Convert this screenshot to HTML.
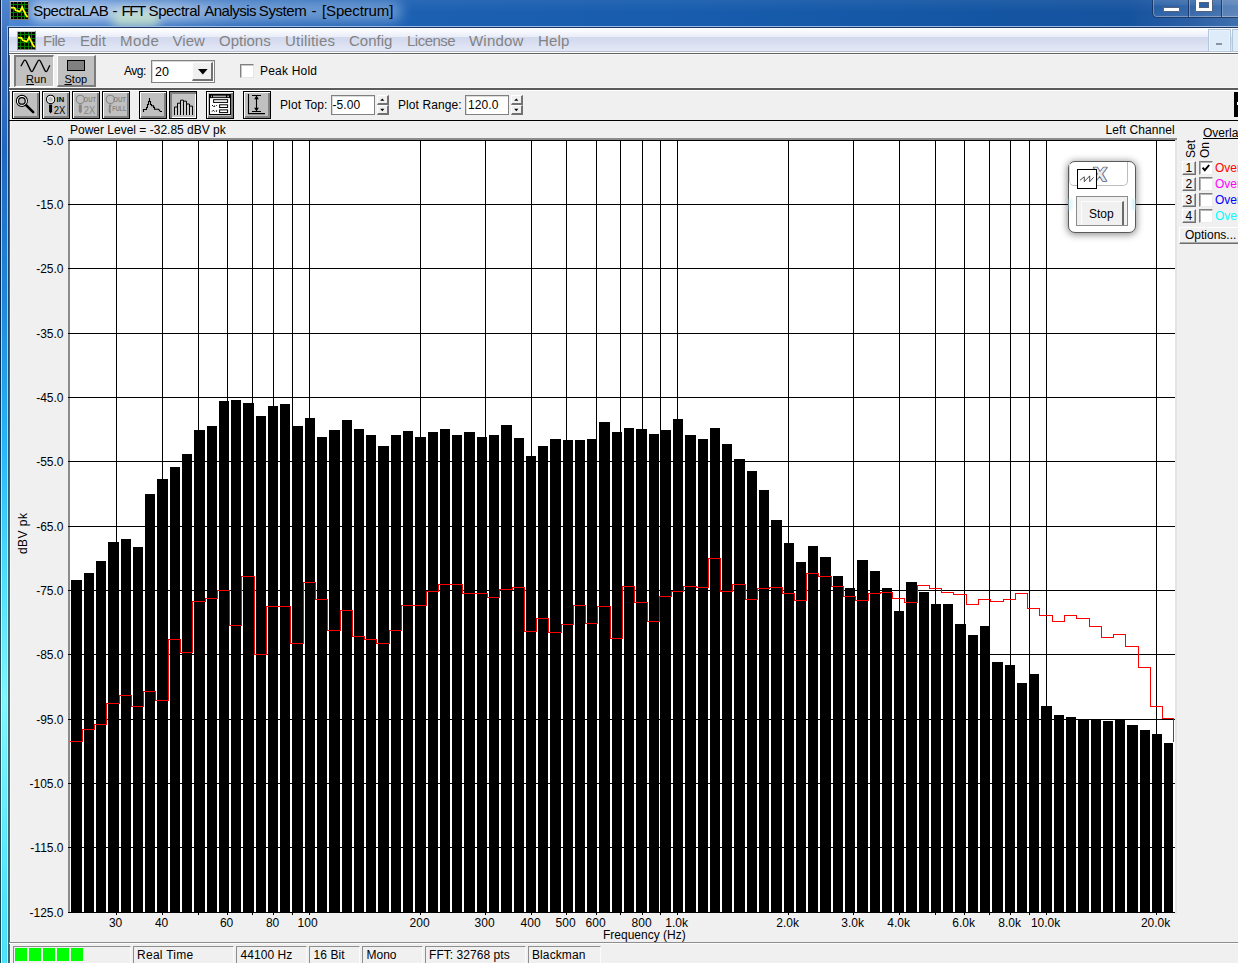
<!DOCTYPE html>
<html><head><meta charset="utf-8"><title>SpectraLAB</title>
<style>
html,body{margin:0;padding:0;}
body{width:1238px;height:963px;overflow:hidden;background:#f0f0f0;position:relative;font-family:'Liberation Sans', Arial, sans-serif;}
.t{position:absolute;white-space:nowrap;line-height:normal;font-family:'Liberation Sans', Arial, sans-serif;}
.b{position:absolute;box-sizing:border-box;}
svg{position:absolute;overflow:visible;}
</style></head>
<body>
<div class="b" style="left:0px;top:0px;width:1238px;height:28px;background:linear-gradient(90deg,#5089d3 0px,#3f7bc9 60px,#2b6abb 200px,#1c60b2 420px,#175cad 700px,#1455a2 1000px,#16539f 1130px,#2a5fa5 1190px,#3f6fae 1238px);"></div>
<div class="b" style="left:0px;top:0px;width:1238px;height:28px;background:linear-gradient(180deg,rgba(255,255,255,0.06) 0,rgba(255,255,255,0) 12px,rgba(0,0,40,0.0) 26px);"></div>
<div class="b" style="left:30px;top:1px;width:372px;height:21px;background:linear-gradient(90deg,rgba(235,243,255,0.66) 0,rgba(235,243,255,0.62) 38%,rgba(225,238,255,0.40) 55%,rgba(225,238,255,0.36) 100%);filter:blur(6px);border-radius:10px;"></div>
<div class="b" style="left:112px;top:10px;width:48px;height:18px;background:rgba(215,240,200,0.65);filter:blur(5px);border-radius:8px;"></div>
<div class="b" style="left:0px;top:0px;width:9px;height:963px;background:linear-gradient(180deg,#4f86d0 0px,#4278c4 28px,#3a70be 60px,#1e68c4 150px,#1e88e0 300px,#28b8ff 450px,#50e0ff 580px,#80f8ff 700px,#68eeff 800px,#50e4ff 900px,#4ce2ff 963px);"></div>
<div class="b" style="left:0px;top:0px;width:1px;height:963px;background:linear-gradient(180deg,#0a1c3c 0px,#001030 60px,#001838 150px,#002850 300px,#003858 450px,#104858 580px,#205058 700px,#104850 900px);"></div>
<div class="b" style="left:1px;top:0px;width:1px;height:963px;background:linear-gradient(180deg,#b8d0ee 0px,#b0c8e8 60px,#a8c8f0 150px,#a8d4f8 300px,#a8e4ff 450px,#c0f8ff 580px,#d0ffff 700px,#c8fcff 900px);"></div>
<div class="b" style="left:2px;top:28px;width:1px;height:963px;background:rgba(0,20,80,0.04);"></div>
<div class="b" style="left:6px;top:28px;width:1px;height:963px;background:rgba(0,20,80,0.04);"></div>
<div class="b" style="left:7px;top:26px;width:1px;height:963px;background:linear-gradient(180deg,#a8c0e0 0px,#a0c0e8 124px,#a0d0f4 274px,#a8e0fc 424px,#b8f8ff 554px,#b0ffff 674px,#b0fcff 874px);"></div>
<div class="b" style="left:8px;top:27px;width:1px;height:963px;background:linear-gradient(180deg,#1c3560 0px,#1c3860 123px,#204868 273px,#285870 423px,#386870 553px,#406468 673px,#386870 873px);"></div>
<div class="b" style="left:7px;top:26px;width:1238px;height:1px;background:#9dbde6;"></div>
<div class="b" style="left:8px;top:27px;width:1238px;height:1px;background:#1a3560;"></div>
<div class="b" style="left:9px;top:53px;width:1px;height:963px;background:#626262;"></div>
<div class="b" style="left:10px;top:54px;width:1px;height:963px;background:#f9f9f9;"></div>
<svg width="19" height="19" viewBox="0 0 19 19" style="left:10px;top:1px" shape-rendering="crispEdges"><rect x="0" y="0" width="19" height="19" fill="#808080"/><rect x="0" y="0" width="18" height="1" fill="#c4c4c4"/><rect x="0" y="1" width="1" height="17" fill="#9c9c9c"/><rect x="1" y="1" width="17" height="17" fill="#000"/><path d="M3 1h1v17h-1zM7 1h1v17h-1zM11 1h1v17h-1zM14 1h1v17h-1zM1 3h17v1h-17zM1 7h17v1h-17zM1 11h17v1h-17zM1 15h17v1h-17z" fill="#007c00"/><polyline points="1,6.5 4.5,6.9 5.6,9.2 7,9.6 9.5,10.6 10.4,9.8 12.2,6.2 13.5,9.5 14.6,10.8 15.4,13 17.6,16.2" fill="none" stroke="#ffff00" stroke-width="1.7" shape-rendering="auto"/></svg>
<div class="t" style="left:0;top:0;font-size:15px;color:#000;"><span style="position:absolute;left:33.2px;top:2px;letter-spacing:-0.5px">SpectraLAB</span> <span style="position:absolute;left:112.4px;top:2px;letter-spacing:0px">-</span> <span style="position:absolute;left:121.6px;top:2px;letter-spacing:-1.5px">FFT</span> <span style="position:absolute;left:148.6px;top:2px;letter-spacing:-0.47px">Spectral</span> <span style="position:absolute;left:204.2px;top:2px;letter-spacing:-0.49px">Analysis</span> <span style="position:absolute;left:258.8px;top:2px;letter-spacing:-0.4px">System</span> <span style="position:absolute;left:311.4px;top:2px;letter-spacing:0px">-</span> <span style="position:absolute;left:322px;top:2px;letter-spacing:-0.13px">[Spectrum]</span></div>
<div class="b" style="left:1152px;top:-6px;width:100px;height:24px;border:1px solid rgba(20,40,80,0.75);border-radius:5px;background:linear-gradient(180deg,rgba(255,255,255,0.16),rgba(255,255,255,0.08) 45%,rgba(255,255,255,0.02) 50%,rgba(255,255,255,0.10));box-shadow:inset 0 0 0 1px rgba(255,255,255,0.30);"></div>
<div class="b" style="left:1188px;top:0px;width:1px;height:17px;background:rgba(20,40,80,0.75);"></div>
<div class="b" style="left:1189px;top:0px;width:1px;height:17px;background:rgba(255,255,255,0.28);"></div>
<div class="b" style="left:1221px;top:0px;width:1px;height:17px;background:rgba(20,40,80,0.75);"></div>
<div class="b" style="left:1222px;top:0px;width:1px;height:17px;background:rgba(255,255,255,0.28);"></div>
<div class="b" style="left:1223px;top:0px;width:15px;height:17px;background:rgba(255,255,255,0.10);"></div>
<div class="b" style="left:1163px;top:7px;width:17px;height:5px;background:#fff;border:1px solid #53627a;border-radius:1px;"></div>
<div class="b" style="left:1195px;top:-2px;width:18px;height:14px;background:#fff;border:1px solid #53627a;border-radius:1px;"></div>
<div class="b" style="left:1199px;top:2px;width:10px;height:6px;background:#2e64a8;border:1px solid #53627a;"></div>
<div class="b" style="left:9px;top:28px;width:1229px;height:25px;background:linear-gradient(180deg,#ffffff 0,#fbfcfe 2px,#e9edf8 8.8px,#d3daee 9px,#d6dcef 13px,#dde3f3 18px,#e3e8f7 23px,#b9c0d4 23px,#b9c0d4 24px,#ffffff 24px);"></div>
<svg width="19" height="19" viewBox="0 0 19 19" style="left:17px;top:31px" shape-rendering="crispEdges"><rect x="0" y="0" width="19" height="19" fill="#808080"/><rect x="0" y="0" width="18" height="1" fill="#c4c4c4"/><rect x="0" y="1" width="1" height="17" fill="#9c9c9c"/><rect x="1" y="1" width="17" height="17" fill="#000"/><path d="M3 1h1v17h-1zM7 1h1v17h-1zM11 1h1v17h-1zM14 1h1v17h-1zM1 3h17v1h-17zM1 7h17v1h-17zM1 11h17v1h-17zM1 15h17v1h-17z" fill="#007c00"/><polyline points="1,6.5 4.5,6.9 5.6,9.2 7,9.6 9.5,10.6 10.4,9.8 12.2,6.2 13.5,9.5 14.6,10.8 15.4,13 17.6,16.2" fill="none" stroke="#ffff00" stroke-width="1.7" shape-rendering="auto"/></svg>
<div class="t " style="left:43px;top:32px;font-size:15px;color:#838383;letter-spacing:-0.5px;">File</div>
<div class="t " style="left:80px;top:32px;font-size:15px;color:#838383;letter-spacing:0px;">Edit</div>
<div class="t " style="left:120px;top:32px;font-size:15px;color:#838383;letter-spacing:0.4px;">Mode</div>
<div class="t " style="left:172.5px;top:32px;font-size:15px;color:#838383;letter-spacing:0.05px;">View</div>
<div class="t " style="left:219px;top:32px;font-size:15px;color:#838383;letter-spacing:0px;">Options</div>
<div class="t " style="left:285px;top:32px;font-size:15px;color:#838383;letter-spacing:0.2px;">Utilities</div>
<div class="t " style="left:349px;top:32px;font-size:15px;color:#838383;letter-spacing:0px;">Config</div>
<div class="t " style="left:407px;top:32px;font-size:15px;color:#838383;letter-spacing:-0.5px;">License</div>
<div class="t " style="left:469px;top:32px;font-size:15px;color:#838383;letter-spacing:0.2px;">Window</div>
<div class="t " style="left:538px;top:32px;font-size:15px;color:#838383;letter-spacing:0.2px;">Help</div>
<div class="b" style="left:1208px;top:29px;width:23px;height:23px;background:#deebf8;border:1px solid #b4c6dc;box-shadow:inset 0 0 0 1px #eaf2fb;"></div>
<div class="b" style="left:1216px;top:43px;width:6px;height:2px;background:#8a94a2;"></div>
<div class="b" style="left:1232px;top:29px;width:23px;height:23px;background:#deebf8;border:1px solid #b4c6dc;"></div>
<div class="b" style="left:9px;top:53px;width:1229px;height:1px;background:#646464;"></div>
<div class="b" style="left:9px;top:54px;width:1229px;height:1px;background:#f8f8f8;"></div>
<div class="b" style="left:14px;top:55px;width:40px;height:32px;background:#c1c1c1;border-top:2px solid #7c7c7c;border-left:2px solid #7c7c7c;border-bottom:1px solid #fff;border-right:1px solid #fff;"></div>
<svg width="40" height="32" viewBox="14 55 40 32" style="left:14px;top:55px"><path d="M20.9 66.3 L23.3 61.8 Q24.9 58.4 26.5 61.8 L30.3 69.9 Q31.8 73.2 33.3 69.9 L37.5 61.8 Q39.1 58.4 40.7 61.8 L44.6 69.9 Q46.1 73.2 47.6 69.9 L49.8 65.3" fill="none" stroke="#000" stroke-width="1.3"/></svg>
<div class="t " style="left:26px;top:73px;font-size:11px;color:#000;letter-spacing:0.1px;"><u>R</u>un</div>
<div class="b" style="left:57px;top:55px;width:39px;height:32px;background:#c0c0c0;border-top:1px solid #fff;border-left:1px solid #fff;border-bottom:2px solid #7c7c7c;border-right:2px solid #7c7c7c;"></div>
<div class="b" style="left:67px;top:60px;width:18px;height:11px;background:#808080;border:1px solid #000;"></div>
<div class="t " style="left:64.5px;top:73px;font-size:11px;color:#000;letter-spacing:0px;"><u>S</u>top</div>
<div class="t " style="left:124px;top:64px;font-size:12px;color:#000;letter-spacing:-0.5px;">Avg:</div>
<div class="b" style="left:151px;top:60px;width:64px;height:23px;background:#fff;border:1px solid #828282;box-shadow:inset 1px 1px 0 #d8d8d8;"></div>
<div class="t " style="left:155px;top:65px;font-size:12.5px;color:#000;">20</div>
<div class="b" style="left:192px;top:62px;width:21px;height:19px;background:#f0f0f0;border-top:1px solid #fff;border-left:1px solid #fff;border-right:2px solid #727272;border-bottom:2px solid #727272;"></div>
<svg width="10" height="6" viewBox="0 0 10 6" style="left:197.5px;top:68.5px"><path d="M0 0h9.6l-4.8 5.4z" fill="#000"/></svg>
<div class="b" style="left:240px;top:64px;width:14px;height:14px;background:#fff;border-top:1px solid #808080;border-left:1px solid #808080;border-right:1px solid #e6e6e6;border-bottom:1px solid #e6e6e6;box-shadow:inset 1px 1px 0 #c8c8c8;"></div>
<div class="t " style="left:260px;top:64px;font-size:12px;color:#000;letter-spacing:0.2px;">Peak Hold</div>
<div class="b" style="left:9px;top:87px;width:1229px;height:1px;background:#f7f7f7;"></div>
<div class="b" style="left:9px;top:88px;width:1229px;height:1px;background:#5c5c5c;"></div>
<div class="b" style="left:9px;top:89px;width:1229px;height:1px;background:#5c5c5c;"></div>
<div class="b" style="left:9px;top:90px;width:1229px;height:1px;background:#ffffff;"></div>
<div class="b" style="left:9px;top:120px;width:1229px;height:1px;background:#000;"></div>
<div class="b" style="left:12px;top:91px;width:28px;height:28px;background:#c0c0c0;border:1px solid #000;box-shadow:inset 1px 1px 0 #fff,inset -2px -2px 0 #808080;"></div>
<div class="b" style="left:42px;top:91px;width:28px;height:28px;background:#c0c0c0;border:1px solid #000;box-shadow:inset 1px 1px 0 #fff,inset -2px -2px 0 #808080;"></div>
<div class="b" style="left:72px;top:91px;width:28px;height:28px;background:#c0c0c0;border:1px solid #000;box-shadow:inset 1px 1px 0 #fff,inset -2px -2px 0 #808080;"></div>
<div class="b" style="left:102px;top:91px;width:28px;height:28px;background:#c0c0c0;border:1px solid #000;box-shadow:inset 1px 1px 0 #fff,inset -2px -2px 0 #808080;"></div>
<div class="b" style="left:139px;top:91px;width:28px;height:28px;background:#c0c0c0;border:1px solid #000;box-shadow:inset 1px 1px 0 #fff,inset -2px -2px 0 #808080;"></div>
<div class="b" style="left:169px;top:91px;width:28px;height:28px;background:#c4c4c4;border:1px solid #000;box-shadow:inset 2px 2px 0 #808080,inset -1px -1px 0 #fff;"></div>
<div class="b" style="left:206px;top:91px;width:28px;height:28px;background:#c0c0c0;border:1px solid #000;box-shadow:inset 1px 1px 0 #fff,inset -2px -2px 0 #808080;"></div>
<div class="b" style="left:243px;top:91px;width:28px;height:28px;background:#c0c0c0;border:1px solid #000;box-shadow:inset 1px 1px 0 #fff,inset -2px -2px 0 #808080;"></div>
<svg width="28" height="28" viewBox="12 91 28 28" style="left:12px;top:91px"><circle cx="21.9" cy="100.9" r="5.4" fill="none" stroke="#000" stroke-width="1.3"/><circle cx="21.9" cy="100.9" r="4.4" fill="none" stroke="#fff" stroke-width="1.1"/><circle cx="21.9" cy="100.9" r="3.3" fill="none" stroke="#000" stroke-width="1.2"/><path d="M26.3 105.3L33.2 112.2" stroke="#000" stroke-width="2.6" stroke-linecap="round"/></svg>
<svg width="28" height="28" viewBox="42 91 28 28" style="left:42px;top:91px"><circle cx="50.6" cy="99.4" r="4.1" fill="none" stroke="#000" stroke-width="1.1"/><circle cx="50.6" cy="99.4" r="3.1" fill="#c0c0c0" stroke="#fff" stroke-width="1"/><path d="M49.1 104.6h3v7l-1.5 2l-1.5 -2z" fill="#000"/><text x="56.6" y="102.2" style="font-family:'Liberation Sans',Arial,sans-serif;font-size:6.5px;font-weight:bold" fill="#000" textLength="7.6" lengthAdjust="spacingAndGlyphs">IN</text><text x="53.8" y="113.7" style="font-family:'Liberation Sans',Arial,sans-serif;font-size:11.6px" fill="#000" textLength="11.6" lengthAdjust="spacingAndGlyphs">2X</text></svg>
<svg width="28" height="28" viewBox="72 91 28 28" style="left:72px;top:91px"><circle cx="80.3" cy="99.4" r="4.1" fill="none" stroke="#868686" stroke-width="1.1"/><path d="M78.8 104.6h3v7l-1.5 2l-1.5 -2z" fill="#868686"/><text x="83.6" y="102.2" style="font-family:'Liberation Sans',Arial,sans-serif;font-size:6.5px;font-weight:bold" fill="#868686" textLength="12.4" lengthAdjust="spacingAndGlyphs">OUT</text><text x="83.8" y="113.7" style="font-family:'Liberation Sans',Arial,sans-serif;font-size:11.6px" fill="#868686" textLength="11.4" lengthAdjust="spacingAndGlyphs">2X</text></svg>
<svg width="28" height="28" viewBox="102 91 28 28" style="left:102px;top:91px"><circle cx="110.3" cy="99.4" r="4.1" fill="none" stroke="#868686" stroke-width="1.1"/><path d="M109 104.4h2.6l-1.2 3.6l0.6 4.2l-0.8 1.6l-1.6 -2z" fill="#868686"/><text x="113.2" y="102.2" style="font-family:'Liberation Sans',Arial,sans-serif;font-size:6.5px;font-weight:bold" fill="#868686" textLength="12.8" lengthAdjust="spacingAndGlyphs">OUT</text><text x="112.3" y="110.9" style="font-family:'Liberation Sans',Arial,sans-serif;font-size:6.3px;font-weight:bold" fill="#868686" textLength="14" lengthAdjust="spacingAndGlyphs">FULL</text></svg>
<svg width="28" height="28" viewBox="139 91 28 28" style="left:139px;top:91px"><path d="M143.5 112V109.5H146.5V107.5H147.5V104.5H148.5V101.5H149.5V98 V101.5H150.5V104.5H151.5V105.8H153.5V107.4H154.5V109.3H158.6L160.4 111.5H162" fill="none" stroke="#000" stroke-width="1.1"/></svg>
<svg width="28" height="28" viewBox="169 91 28 28" style="left:169px;top:91px"><path d="M174.5 115V107.0H177.5V115" fill="#cfcfcf" stroke="#000" stroke-width="1"/><path d="M177.5 115V103.2H180.5V115" fill="#cfcfcf" stroke="#000" stroke-width="1"/><path d="M180.5 115V100.2H183.5V115" fill="#cfcfcf" stroke="#000" stroke-width="1"/><path d="M183.5 115V101.2H186.5V115" fill="#cfcfcf" stroke="#000" stroke-width="1"/><path d="M186.5 115V104.0H189.5V115" fill="#cfcfcf" stroke="#000" stroke-width="1"/><path d="M189.5 115V106.1H192.5V115" fill="#cfcfcf" stroke="#000" stroke-width="1"/></svg>
<svg width="28" height="28" viewBox="206 91 28 28" style="left:206px;top:91px"><rect x="209.5" y="94.5" width="21" height="20" fill="#fff" stroke="#000" stroke-width="1"/><rect x="209.5" y="94.5" width="21" height="3.6" fill="#000"/><rect x="211.2" y="95.6" width="0.8" height="1.6" fill="#ccc"/><rect x="213" y="95.6" width="13" height="1.6" fill="#aaa"/><rect x="227.4" y="95.6" width="1.4" height="1.6" fill="#ccc"/><rect x="213.6" y="99.7" width="14" height="2.7" fill="#fff" stroke="#000" stroke-width="1"/><rect x="219.6" y="104.8" width="8" height="2.7" fill="#fff" stroke="#000" stroke-width="1"/><rect x="219.6" y="109.9" width="8" height="2.7" fill="#fff" stroke="#000" stroke-width="1"/><path d="M212 105l1.6 1.6M214.6 105.5v1.4M216.6 105.2v0.8M212 111.6l1.3 -1.4l1.3 1.4M216.4 110.2v1.6" stroke="#000" stroke-width="1" fill="none"/></svg>
<svg width="28" height="28" viewBox="243 91 28 28" style="left:243px;top:91px"><path d="M248.5 94v19.6h16.5" fill="none" stroke="#000" stroke-width="1.1"/><path d="M252 95.5h9M252 111.5h9M256.5 96v15" fill="none" stroke="#000" stroke-width="1.1"/><path d="M256.5 95.8l2.4 3.4h-4.8zM256.5 111.2l2.4 -3.4h-4.8z" fill="#000"/></svg>
<div class="t " style="left:280px;top:98px;font-size:12px;color:#000;letter-spacing:0.12px;">Plot Top:</div>
<div class="b" style="left:331px;top:95px;width:44px;height:20px;background:#fff;border:1px solid #808080;box-shadow:inset 1px 1px 0 #dcdcdc;"></div><div class="t " style="left:332.5px;top:98px;font-size:12px;color:#000;letter-spacing:0.1px;">-5.00</div>
<div class="b" style="left:377px;top:95px;width:12px;height:10px;background:#f0f0f0;border-top:1px solid #fff;border-left:1px solid #fff;border-right:2px solid #727272;border-bottom:2px solid #727272;"></div><div class="b" style="left:377px;top:105px;width:12px;height:10px;background:#f0f0f0;border-top:1px solid #fff;border-left:1px solid #fff;border-right:2px solid #727272;border-bottom:2px solid #727272;"></div><svg width="12" height="20" viewBox="0 0 12 20" style="left:377px;top:95px"><path d="M5.3 3.4l2.1 2.4h-4.2zM5.3 16.2l2.1 -2.4h-4.2z" fill="#000"/></svg>
<div class="t " style="left:398px;top:98px;font-size:12px;color:#000;letter-spacing:0.08px;">Plot Range:</div>
<div class="b" style="left:465px;top:95px;width:44px;height:20px;background:#fff;border:1px solid #808080;box-shadow:inset 1px 1px 0 #dcdcdc;"></div><div class="t " style="left:468px;top:98px;font-size:12px;color:#000;letter-spacing:0.1px;">120.0</div>
<div class="b" style="left:511px;top:95px;width:12px;height:10px;background:#f0f0f0;border-top:1px solid #fff;border-left:1px solid #fff;border-right:2px solid #727272;border-bottom:2px solid #727272;"></div><div class="b" style="left:511px;top:105px;width:12px;height:10px;background:#f0f0f0;border-top:1px solid #fff;border-left:1px solid #fff;border-right:2px solid #727272;border-bottom:2px solid #727272;"></div><svg width="12" height="20" viewBox="0 0 12 20" style="left:511px;top:95px"><path d="M5.3 3.4l2.1 2.4h-4.2zM5.3 16.2l2.1 -2.4h-4.2z" fill="#000"/></svg>
<div class="b" style="left:1234px;top:92px;width:10px;height:25px;background:#000;"></div>
<div class="b" style="left:1237px;top:102px;width:1px;height:3px;background:#fff;"></div>
<div class="t " style="left:1203px;top:126px;font-size:12px;color:#000;"><u>Overlays</u></div>
<div class="t" style="left:1194.5px;top:158px;font-size:12px;transform-origin:0 0;transform:rotate(-90deg) translateY(-11px);">Set</div>
<div class="t" style="left:1209px;top:158px;font-size:12px;transform-origin:0 0;transform:rotate(-90deg) translateY(-11px);">On</div>
<div class="b" style="left:1182px;top:161px;width:14px;height:14px;background:#f0f0f0;border-top:1px solid #fff;border-left:1px solid #fff;border-right:1px solid #6e6e6e;border-bottom:1px solid #6e6e6e;box-shadow:inset -1px -1px 0 #a8a8a8;"></div>
<div class="t " style="left:1185.5px;top:161px;font-size:12px;color:#000;">1</div>
<div class="b" style="left:1199px;top:161px;width:14px;height:14px;background:#fff;border-top:1px solid #808080;border-left:1px solid #808080;border-right:1px solid #ececec;border-bottom:1px solid #ececec;box-shadow:inset 1px 1px 0 #b4b4b4;"></div>
<div class="t " style="left:1215px;top:161px;font-size:12px;color:#ff0000;">Overlay 1</div>
<div class="b" style="left:1182px;top:177px;width:14px;height:14px;background:#f0f0f0;border-top:1px solid #fff;border-left:1px solid #fff;border-right:1px solid #6e6e6e;border-bottom:1px solid #6e6e6e;box-shadow:inset -1px -1px 0 #a8a8a8;"></div>
<div class="t " style="left:1185.5px;top:177px;font-size:12px;color:#000;">2</div>
<div class="b" style="left:1199px;top:177px;width:14px;height:14px;background:#fff;border-top:1px solid #808080;border-left:1px solid #808080;border-right:1px solid #ececec;border-bottom:1px solid #ececec;box-shadow:inset 1px 1px 0 #b4b4b4;"></div>
<div class="t " style="left:1215px;top:177px;font-size:12px;color:#ff00ff;">Overlay 2</div>
<div class="b" style="left:1182px;top:193px;width:14px;height:14px;background:#f0f0f0;border-top:1px solid #fff;border-left:1px solid #fff;border-right:1px solid #6e6e6e;border-bottom:1px solid #6e6e6e;box-shadow:inset -1px -1px 0 #a8a8a8;"></div>
<div class="t " style="left:1185.5px;top:193px;font-size:12px;color:#000;">3</div>
<div class="b" style="left:1199px;top:193px;width:14px;height:14px;background:#fff;border-top:1px solid #808080;border-left:1px solid #808080;border-right:1px solid #ececec;border-bottom:1px solid #ececec;box-shadow:inset 1px 1px 0 #b4b4b4;"></div>
<div class="t " style="left:1215px;top:193px;font-size:12px;color:#0000ff;">Overlay 3</div>
<div class="b" style="left:1182px;top:209px;width:14px;height:14px;background:#f0f0f0;border-top:1px solid #fff;border-left:1px solid #fff;border-right:1px solid #6e6e6e;border-bottom:1px solid #6e6e6e;box-shadow:inset -1px -1px 0 #a8a8a8;"></div>
<div class="t " style="left:1185.5px;top:209px;font-size:12px;color:#000;">4</div>
<div class="b" style="left:1199px;top:209px;width:14px;height:14px;background:#fff;border-top:1px solid #808080;border-left:1px solid #808080;border-right:1px solid #ececec;border-bottom:1px solid #ececec;box-shadow:inset 1px 1px 0 #b4b4b4;"></div>
<div class="t " style="left:1215px;top:209px;font-size:12px;color:#00ffff;">Overlay 4</div>
<svg width="12" height="12" viewBox="0 0 12 12" style="left:1200px;top:162px"><path d="M2.6 5.6l2.2 2.6l4.4 -5.2" fill="none" stroke="#000" stroke-width="1.9"/></svg>
<div class="b" style="left:1179px;top:227px;width:70px;height:17px;background:#f0f0f0;border-top:1px solid #fff;border-left:1px solid #fff;border-bottom:1px solid #6e6e6e;box-shadow:inset 0 -1px 0 #a8a8a8;"></div>
<div class="t " style="left:1185px;top:228px;font-size:12px;color:#000;">Options...</div>
<div class="b" style="left:9px;top:942px;width:1229px;height:1px;background:#8e8e8e;"></div>
<div class="b" style="left:9px;top:943px;width:1229px;height:1px;background:#fbfbfb;"></div>
<div class="b" style="left:13px;top:946px;width:118px;height:20px;border-top:1px solid #8e8e8e;border-left:1px solid #8e8e8e;border-right:1px solid #fbfbfb;"></div>
<div class="b" style="left:133px;top:946px;width:101px;height:20px;border-top:1px solid #8e8e8e;border-left:1px solid #8e8e8e;border-right:1px solid #fbfbfb;"></div>
<div class="b" style="left:236px;top:946px;width:71px;height:20px;border-top:1px solid #8e8e8e;border-left:1px solid #8e8e8e;border-right:1px solid #fbfbfb;"></div>
<div class="b" style="left:309px;top:946px;width:51px;height:20px;border-top:1px solid #8e8e8e;border-left:1px solid #8e8e8e;border-right:1px solid #fbfbfb;"></div>
<div class="b" style="left:362px;top:946px;width:61px;height:20px;border-top:1px solid #8e8e8e;border-left:1px solid #8e8e8e;border-right:1px solid #fbfbfb;"></div>
<div class="b" style="left:425px;top:946px;width:101px;height:20px;border-top:1px solid #8e8e8e;border-left:1px solid #8e8e8e;border-right:1px solid #fbfbfb;"></div>
<div class="b" style="left:528px;top:946px;width:73px;height:20px;border-top:1px solid #8e8e8e;border-left:1px solid #8e8e8e;border-right:1px solid #fbfbfb;"></div>
<div class="b" style="left:15px;top:948px;width:12px;height:13px;background:#00ff00;"></div>
<div class="b" style="left:29px;top:948px;width:12px;height:13px;background:#00ff00;"></div>
<div class="b" style="left:43px;top:948px;width:12px;height:13px;background:#00ff00;"></div>
<div class="b" style="left:57px;top:948px;width:12px;height:13px;background:#00ff00;"></div>
<div class="b" style="left:71px;top:948px;width:12px;height:13px;background:#00ff00;"></div>
<div class="t " style="left:137px;top:948px;font-size:12px;color:#000;letter-spacing:0.28px;">Real Time</div>
<div class="t " style="left:240.5px;top:948px;font-size:12px;color:#000;letter-spacing:0.05px;">44100 Hz</div>
<div class="t " style="left:313.5px;top:948px;font-size:12px;color:#000;letter-spacing:0.1px;">16 Bit</div>
<div class="t " style="left:366.5px;top:948px;font-size:12px;color:#000;letter-spacing:0px;">Mono</div>
<div class="t " style="left:429px;top:948px;font-size:12px;color:#000;letter-spacing:0.05px;">FFT: 32768 pts</div>
<div class="t " style="left:532px;top:948px;font-size:12px;color:#000;letter-spacing:0.1px;">Blackman</div>
<svg width="1238" height="963" viewBox="0 0 1238 963" style="left:0;top:0" shape-rendering="crispEdges">
<rect x="68" y="138" width="1109" height="2" fill="#8c8c8c"/>
<rect x="68" y="138" width="2" height="775" fill="#8c8c8c"/>
<rect x="70" y="140" width="1105" height="773" fill="#fff"/>
<rect x="1175" y="140" width="2" height="774" fill="#e4e4e4"/>
<rect x="68" y="140" width="1107" height="1" fill="#000"/>
<rect x="68" y="912" width="1107" height="1" fill="#000"/>
<path d="M68 204h1107v1h-1107zM68 268h1107v1h-1107zM68 333h1107v1h-1107zM68 397h1107v1h-1107zM68 461h1107v1h-1107zM68 526h1107v1h-1107zM68 590h1107v1h-1107zM68 654h1107v1h-1107zM68 719h1107v1h-1107zM68 783h1107v1h-1107zM68 847h1107v1h-1107zM116 141h1v774h-1zM162 141h1v774h-1zM198 141h1v774h-1zM227 141h1v774h-1zM252 141h1v774h-1zM273 141h1v774h-1zM292 141h1v774h-1zM309 141h1v774h-1zM420 141h1v774h-1zM485 141h1v774h-1zM531 141h1v774h-1zM566 141h1v774h-1zM596 141h1v774h-1zM620 141h1v774h-1zM642 141h1v774h-1zM660 141h1v774h-1zM677 141h1v774h-1zM788 141h1v774h-1zM853 141h1v774h-1zM899 141h1v774h-1zM935 141h1v774h-1zM964 141h1v774h-1zM989 141h1v774h-1zM1010 141h1v774h-1zM1029 141h1v774h-1zM1046 141h1v774h-1zM1156 141h1v774h-1z" fill="#000"/>
<path d="M71 580h11v332h-11zM84 573h10v339h-10zM96 561h10v351h-10zM108 542h11v370h-11zM121 539h10v373h-10zM133 547h10v365h-10zM145 494h10v418h-10zM157 479h11v433h-11zM170 467h10v445h-10zM182 454h10v458h-10zM194 430h11v482h-11zM207 426h10v486h-10zM219 401h10v511h-10zM231 400h10v512h-10zM243 403h11v509h-11zM256 416h10v496h-10zM268 406h10v506h-10zM280 404h10v508h-10zM292 426h11v486h-11zM305 418h10v494h-10zM317 437h10v475h-10zM329 430h11v482h-11zM342 420h10v492h-10zM354 429h10v483h-10zM366 435h10v477h-10zM378 446h11v466h-11zM391 435h10v477h-10zM403 431h10v481h-10zM415 437h11v475h-11zM428 432h10v480h-10zM440 429h10v483h-10zM452 435h10v477h-10zM464 432h11v480h-11zM477 437h10v475h-10zM489 435h10v477h-10zM501 425h11v487h-11zM514 438h10v474h-10zM526 456h10v456h-10zM538 446h10v466h-10zM550 439h11v473h-11zM563 440h10v472h-10zM575 440h10v472h-10zM587 439h10v473h-10zM599 422h11v490h-11zM612 432h10v480h-10zM624 428h10v484h-10zM636 429h11v483h-11zM649 434h10v478h-10zM661 430h10v482h-10zM673 419h10v493h-10zM685 435h11v477h-11zM698 439h10v473h-10zM710 428h10v484h-10zM722 444h10v468h-10zM734 459h11v453h-11zM747 471h10v441h-10zM759 490h10v422h-10zM771 520h11v392h-11zM784 543h10v369h-10zM796 562h10v350h-10zM808 546h10v366h-10zM820 557h11v355h-11zM833 576h10v336h-10zM845 588h10v324h-10zM857 560h11v352h-11zM870 571h10v341h-10zM882 588h10v324h-10zM894 611h10v301h-10zM906 582h11v330h-11zM919 592h10v320h-10zM931 604h10v308h-10zM943 604h10v308h-10zM955 624h11v288h-11zM968 635h10v277h-10zM980 626h10v286h-10zM992 662h11v250h-11zM1005 665h10v247h-10zM1017 683h10v229h-10zM1029 674h10v238h-10zM1041 706h11v206h-11zM1054 715h10v197h-10zM1066 717h10v195h-10zM1078 719h11v193h-11zM1091 719h10v193h-10zM1103 721h10v191h-10zM1115 719h10v193h-10zM1127 725h11v187h-11zM1140 730h10v182h-10zM1152 734h10v178h-10zM1164 743h9v169h-9z" fill="#000"/>
<path d="M70 741.5H82.5V729.5H94.5V724.5H106.5V703.5H119.5V695.5H131.5V706.5H143.5V691.5H155.5V700.5H168.5V639.5H180.5V652.5H192.5V601.5H205.5V598.5H217.5V590.5H229.5V625.5H241.5V576.5H254.5V654.5H266.5V606.5H278.5V606.5H290.5V643.5H303.5V582.5H315.5V599.5H327.5V630.5H340.5V610.5H352.5V636.5H364.5V639.5H376.5V643.5H389.5V630.5H401.5V605.5H413.5V605.5H426.5V591.5H438.5V584.5H450.5V584.5H462.5V593.5H475.5V593.5H487.5V597.5H499.5V589.5H512.5V587.5H524.5V631.5H536.5V618.5H548.5V632.5H561.5V624.5H573.5V605.5H585.5V623.5H597.5V606.5H610.5V638.5H622.5V586.5H634.5V602.5H647.5V621.5H659.5V596.5H671.5V591.5H683.5V586.5H696.5V587.5H708.5V558.5H720.5V591.5H732.5V584.5H745.5V599.5H757.5V588.5H769.5V587.5H782.5V593.5H794.5V600.5H806.5V573.5H818.5V576.5H831.5V586.5H843.5V596.5H855.5V600.5H868.5V593.5H880.5V592.5H892.5V598.5H904.5V602.5H917.5V585.5H929.5V588.5H941.5V592.5H953.5V594.5H966.5V604.5H978.5V599.5H990.5V601.5H1003.5V599.5H1015.5V593.5H1027.5V608.5H1039.5V615.5H1052.5V621.5H1064.5V615.5H1076.5V618.5H1089.5V626.5H1101.5V637.5H1113.5V634.5H1125.5V646.5H1138.5V667.5H1150.5V706.5H1162.5V718.5H1173.5V741" fill="none" stroke="#ff0000" stroke-width="1" stroke-linecap="square" stroke-linejoin="miter"/>
</svg>
<div class="t" style="right:1174.5px;top:134px;font-size:12px;color:#000;">-5.0</div>
<div class="t" style="right:1174.5px;top:198px;font-size:12px;color:#000;">-15.0</div>
<div class="t" style="right:1174.5px;top:262px;font-size:12px;color:#000;">-25.0</div>
<div class="t" style="right:1174.5px;top:327px;font-size:12px;color:#000;">-35.0</div>
<div class="t" style="right:1174.5px;top:391px;font-size:12px;color:#000;">-45.0</div>
<div class="t" style="right:1174.5px;top:455px;font-size:12px;color:#000;">-55.0</div>
<div class="t" style="right:1174.5px;top:520px;font-size:12px;color:#000;">-65.0</div>
<div class="t" style="right:1174.5px;top:584px;font-size:12px;color:#000;">-75.0</div>
<div class="t" style="right:1174.5px;top:648px;font-size:12px;color:#000;">-85.0</div>
<div class="t" style="right:1174.5px;top:713px;font-size:12px;color:#000;">-95.0</div>
<div class="t" style="right:1174.5px;top:777px;font-size:12px;color:#000;">-105.0</div>
<div class="t" style="right:1174.5px;top:841px;font-size:12px;color:#000;">-115.0</div>
<div class="t" style="right:1174.5px;top:906px;font-size:12px;color:#000;">-125.0</div>
<div class="t" style="left:65.6px;width:100px;text-align:center;top:916px;font-size:12px;color:#000;">30</div>
<div class="t" style="left:111.6px;width:100px;text-align:center;top:916px;font-size:12px;color:#000;">40</div>
<div class="t" style="left:176.6px;width:100px;text-align:center;top:916px;font-size:12px;color:#000;">60</div>
<div class="t" style="left:222.60000000000002px;width:100px;text-align:center;top:916px;font-size:12px;color:#000;">80</div>
<div class="t" style="left:257.6px;width:100px;text-align:center;top:916px;font-size:12px;color:#000;">100</div>
<div class="t" style="left:369.6px;width:100px;text-align:center;top:916px;font-size:12px;color:#000;">200</div>
<div class="t" style="left:434.6px;width:100px;text-align:center;top:916px;font-size:12px;color:#000;">300</div>
<div class="t" style="left:480.6px;width:100px;text-align:center;top:916px;font-size:12px;color:#000;">400</div>
<div class="t" style="left:515.6px;width:100px;text-align:center;top:916px;font-size:12px;color:#000;">500</div>
<div class="t" style="left:545.6px;width:100px;text-align:center;top:916px;font-size:12px;color:#000;">600</div>
<div class="t" style="left:591.6px;width:100px;text-align:center;top:916px;font-size:12px;color:#000;">800</div>
<div class="t" style="left:626.6px;width:100px;text-align:center;top:916px;font-size:12px;color:#000;">1.0k</div>
<div class="t" style="left:737.6px;width:100px;text-align:center;top:916px;font-size:12px;color:#000;">2.0k</div>
<div class="t" style="left:802.6px;width:100px;text-align:center;top:916px;font-size:12px;color:#000;">3.0k</div>
<div class="t" style="left:848.6px;width:100px;text-align:center;top:916px;font-size:12px;color:#000;">4.0k</div>
<div class="t" style="left:913.6px;width:100px;text-align:center;top:916px;font-size:12px;color:#000;">6.0k</div>
<div class="t" style="left:959.6px;width:100px;text-align:center;top:916px;font-size:12px;color:#000;">8.0k</div>
<div class="t" style="left:995.5999999999999px;width:100px;text-align:center;top:916px;font-size:12px;color:#000;">10.0k</div>
<div class="t" style="left:1105.6px;width:100px;text-align:center;top:916px;font-size:12px;color:#000;">20.0k</div>
<div class="t " style="left:603px;top:928px;font-size:12px;color:#000;">Frequency (Hz)</div>
<div class="t " style="left:70px;top:123px;font-size:12px;color:#000;">Power Level = -32.85 dBV pk</div>
<div class="t" style="right:63.200000000000045px;top:123px;font-size:12px;color:#000;letter-spacing:0.1px;">Left Channel</div>
<div class="t" style="left:26.5px;top:553.5px;font-size:12px;letter-spacing:0.45px;transform-origin:0 0;transform:rotate(-90deg) translateY(-11px);">dBV pk</div>
<div class="b" style="left:1068px;top:161px;width:68px;height:72px;background:#fff;border:1px solid #5a5a5a;border-radius:7px;box-shadow:0 1px 7px 1px rgba(0,0,0,0.42);"></div>
<div class="b" style="left:1069px;top:162px;width:59px;height:24px;border:1px solid #bdbdbd;border-top:none;border-left-color:#d8d8d8;border-radius:0 0 5px 5px;"></div>
<svg width="30" height="26" viewBox="1085 160 30 26" style="left:1085px;top:160px"><text x="1092.2" y="181.3" style="font-family:'Liberation Sans',Arial,sans-serif;font-size:19.5px;font-weight:bold;paint-order:stroke fill" fill="#e9eaf0" stroke="#565d78" stroke-width="1.7" stroke-linejoin="round" transform="translate(1092.2 181.3) scale(1.08 1) skewX(-4) translate(-1092.2 -181.3)">X</text></svg>
<div class="b" style="left:1077px;top:169px;width:20px;height:20px;background:#fff;border:1.5px solid #000;"></div>
<svg width="20" height="20" viewBox="1077 169 20 20" style="left:1077px;top:169px"><path d="M1079.9 180.3L1084.3 176.8V181.7L1089.7 175.9V181.7L1093.6 177.3" fill="none" stroke="#222" stroke-width="0.8"/></svg>
<div class="b" style="left:1076px;top:196px;width:52px;height:30px;background:#f0f0f0;border:1px solid #8c8c8c;"></div>
<div class="b" style="left:1081px;top:201px;width:43px;height:24px;background:#f0f0f0;border-top:1px solid #fdfdfd;border-left:1px solid #fdfdfd;border-right:2px solid #6a6a6a;"></div>
<div class="t " style="left:1089px;top:206.5px;font-size:12px;color:#000;">Stop</div>
<div class="b" style="left:1069px;top:199px;width:5px;height:11px;background:linear-gradient(90deg,rgba(200,238,250,1),rgba(200,238,250,0));filter:blur(1px);"></div>
<div class="b" style="left:1130px;top:199px;width:5px;height:11px;background:linear-gradient(270deg,rgba(200,238,250,1),rgba(200,238,250,0));filter:blur(1px);"></div>
</body></html>
